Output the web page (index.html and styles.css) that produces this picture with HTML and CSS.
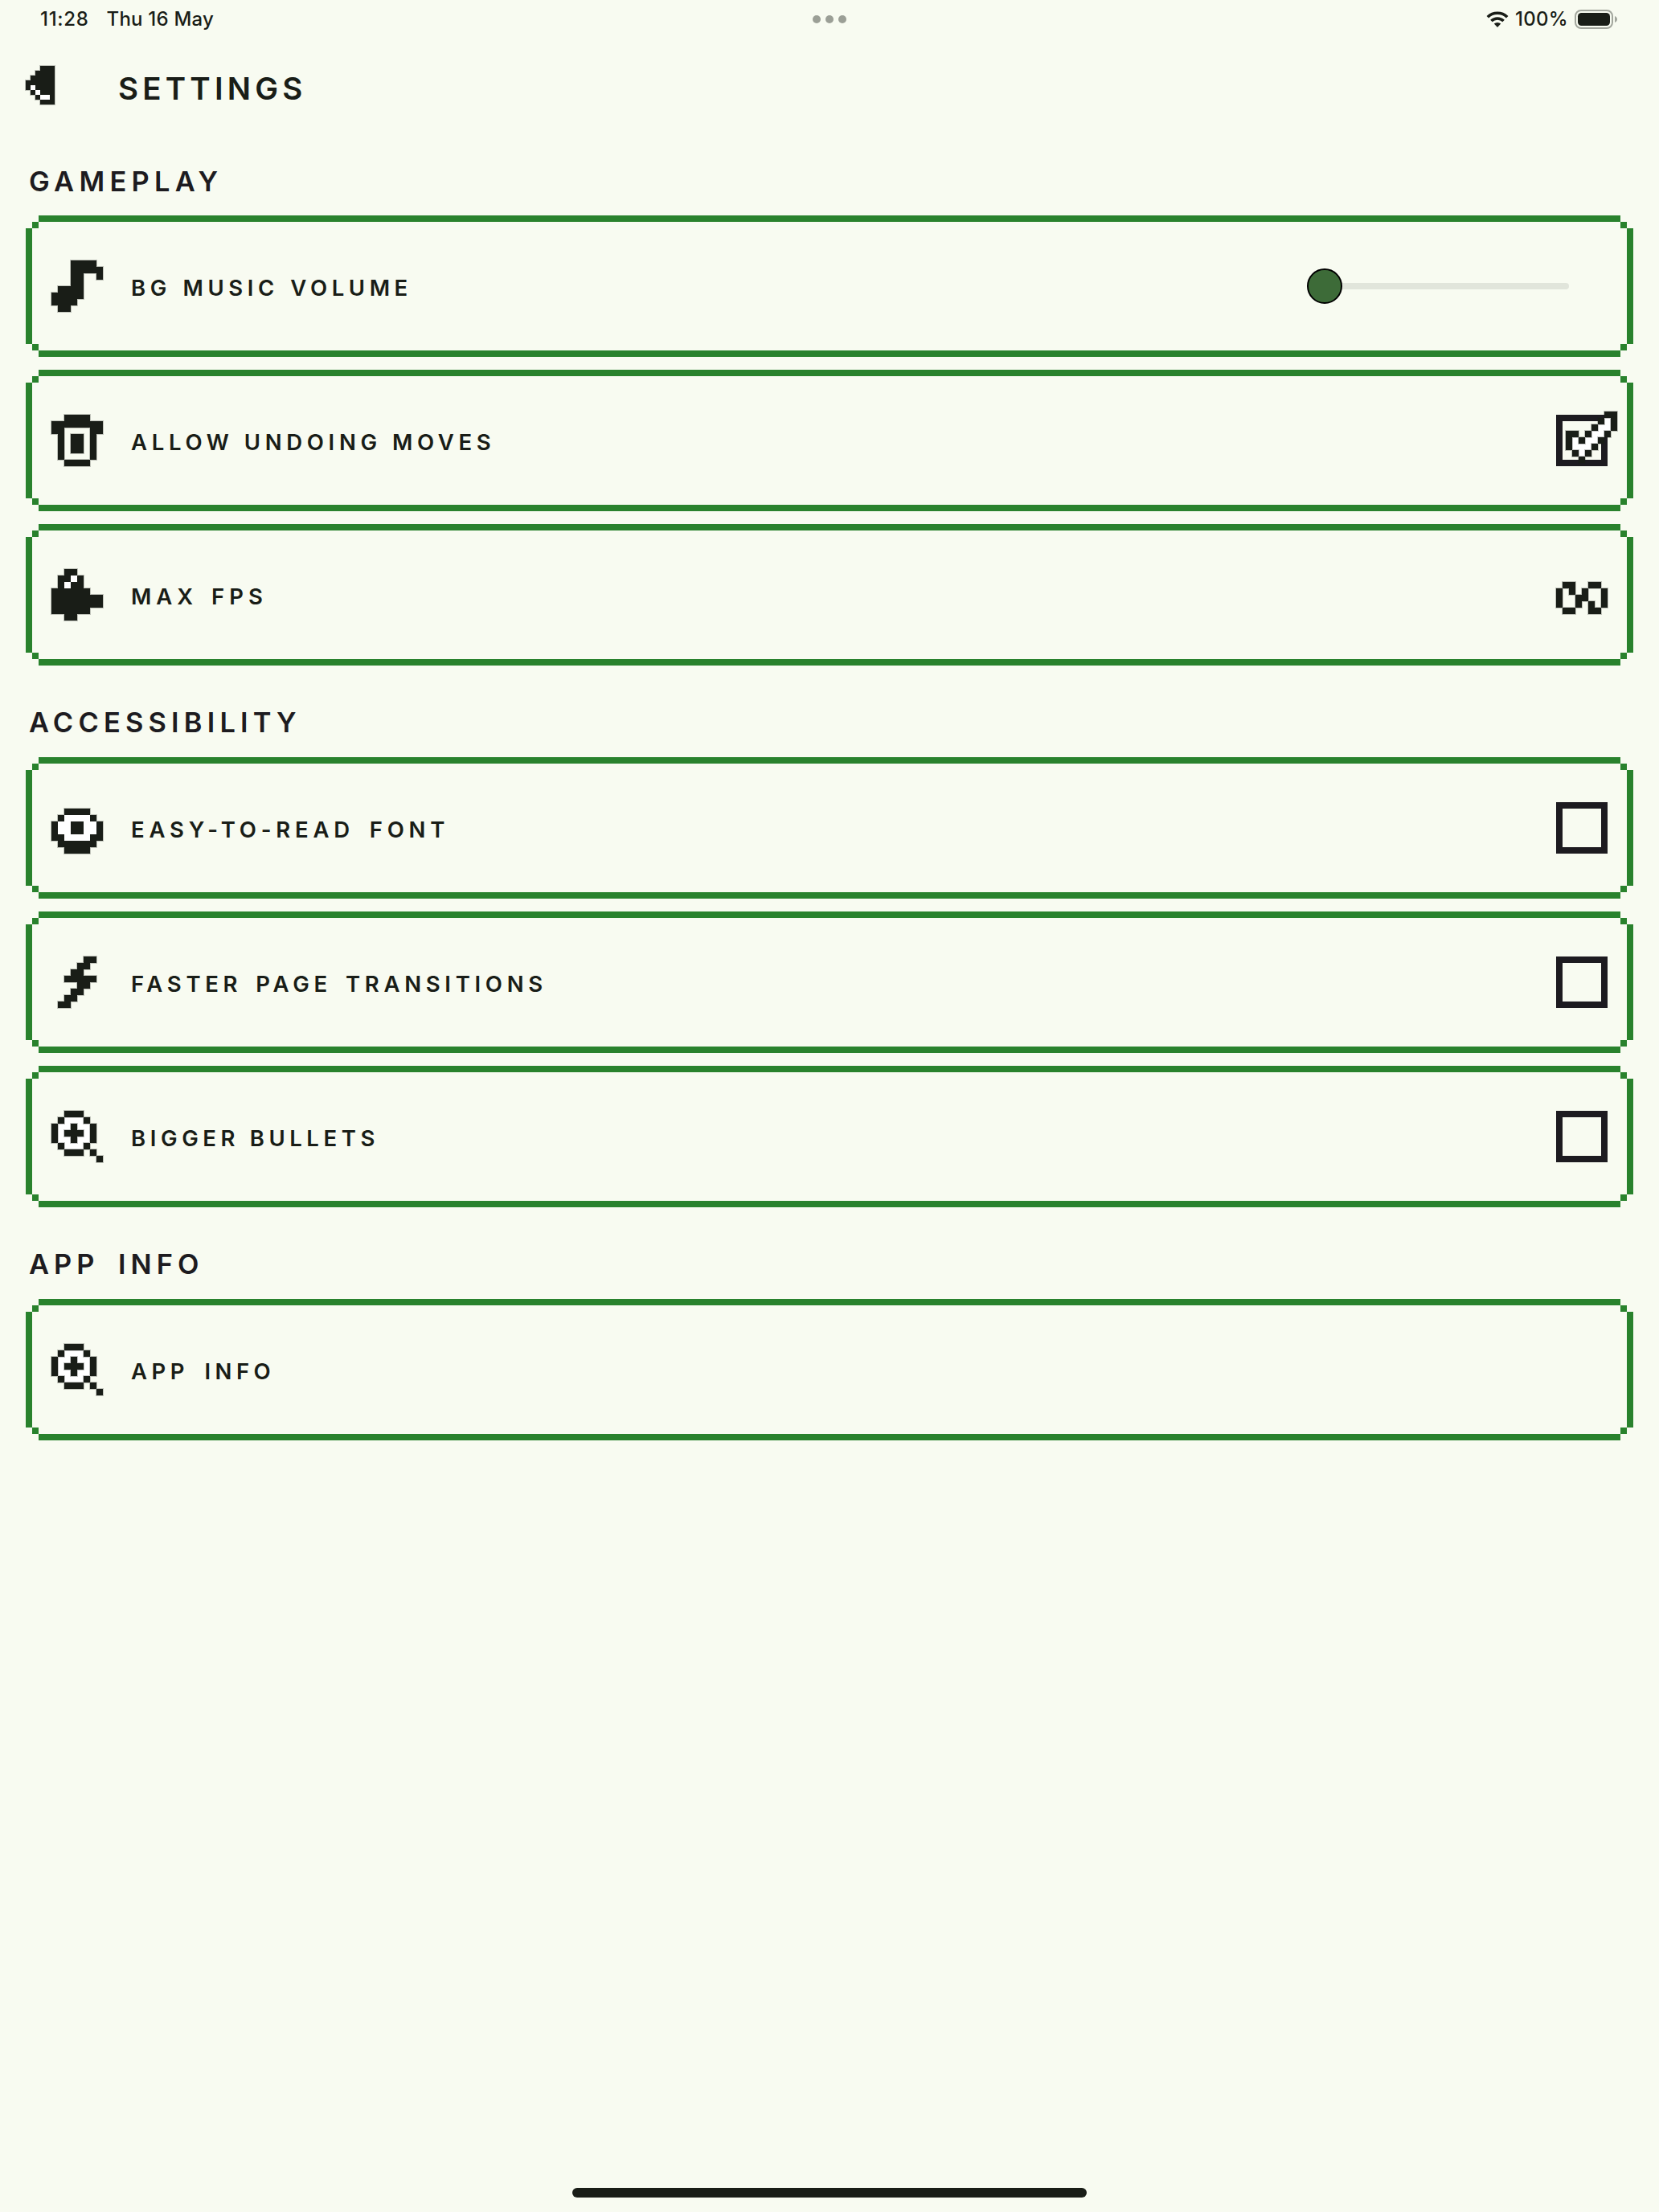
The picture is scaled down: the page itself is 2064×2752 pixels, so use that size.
FILE: index.html
```html
<!DOCTYPE html>
<html lang="en">
<head>
<meta charset="utf-8">
<title>Settings</title>
<link rel="stylesheet" href="styles.css">
</head>
<body>
<svg class="defs" width="0" height="0" aria-hidden="true">
  <symbol id="zoom" viewBox="0 0 8 8"><path class="w" d="M2 1h3v1h1v3h-1v1h-3v-1h-1v-3h1z"/><path d="M2 0h3v1h-3zM1 1h1v1h-1zM5 1h1v1h-1zM0 2h1v3h-1zM6 2h1v3h-1zM3 2h1v1h1v1h-1v1h-1v-1h-1v-1h1zM1 5h1v1h-1zM5 5h1v1h-1zM2 6h3v1h-3zM6 6h1v1h-1zM7 7h1v1h-1z"/></symbol>
</svg>
<header class="status">
  <div class="status-left"><span>11:28</span><span class="date">Thu 16 May</span></div>
  <div class="dots"><i></i><i></i><i></i></div>
  <div class="status-right">
    <svg class="wifi" viewBox="0 0 28 20"><path class="arc" d="M1.8 7.2a17.5 17.5 0 0 1 24.4 0M6.4 12a11 11 0 0 1 15.2 0"/><path d="M14 20l-4.2-4.4a6.2 6.2 0 0 1 8.4 0z"/></svg>
    <span class="percent">100%</span>
    <svg class="battery" viewBox="0 0 54 24"><rect class="shell" x="1" y="1" width="46" height="22" rx="7"/><rect x="4" y="4" width="40" height="16" rx="4.5"/><path class="nub" d="M50 8c4 1.500 4 6.500 0 8z"/></svg>
  </div>
</header>
<nav class="title-bar">
  <svg class="back pixel" viewBox="0 0 6 8"><path d="M3 0h3v8h-3v-1h-1v-1h-1v-1h-1v-2h1v-1h1v-1h1z"/><path class="w" d="M1 4h1v1h1v1h2v1h-2v-1h-1v-1h-1z"/></svg>
  <h1>SETTINGS</h1>
</nav>
<main>
  <section>
    <h2>GAMEPLAY</h2>
    <div class="card">
      <svg class="icon pixel" viewBox="0 0 8 8"><path d="M3 0h4v1h1v2h-1v-1h-2v4h-1v1h-1v1h-2v-1h-1v-2h1v-1h2z"/></svg>
      <span class="label music">BG MUSIC VOLUME</span>
      <div class="slider"><div class="thumb"></div></div>
    </div>
    <div class="card">
      <svg class="icon pixel" viewBox="0 0 8 8"><path fill-rule="evenodd" d="M2 0h4v1h2v2h-1v4h-1v1h-4v-1h-1v-4h-1v-2h2zM2 2v5h4v-5zM3 3h2v3h-2z"/></svg>
      <span class="label undo">ALLOW UNDOING MOVES</span>
      <div class="check"><svg class="tick pixel" viewBox="0 0 8 8"><path class="w" d="M6 1h1v2h-1v1h-1v1h-1v1h-1v1h-1v-1h-1v-2h1v1h1v-1h1v-1h1v-1h1z"/><path d="M6 0h2v3h-1v-2h-1zM5 1h1v1h-1zM4 2h1v1h-1zM0 3h2v1h-1v2h-1zM3 3h1v1h-1zM6 3h1v1h-1zM2 4h1v1h-1zM5 4h1v1h-1zM4 5h1v1h-1zM1 6h1v1h-1zM3 6h1v1h-1zM2 7h1v1h-1z"/></svg></div>
    </div>
    <div class="card">
      <svg class="icon pixel" viewBox="0 0 8 8"><path d="M2 0h2v1h1v2h1v1h2v2h-2v1h-2v1h-2v-1h-2v-4h1v-2h1z"/><path class="w" d="M3 1h1v1h-1zM2 2h1v1h-1z"/></svg>
      <span class="label fps">MAX FPS</span>
      <svg class="icon pixel" viewBox="0 0 8 8"><path d="M1 2h2v2h-1v-1h-1zM5 2h2v1h-2zM0 3h1v3h-1zM7 3h1v3h-1zM4 3h1v2h-1v1h-1v-2h1zM1 6h2v1h-2zM5 5h1v1h1v1h-2z"/></svg>
    </div>
  </section>
  <section>
    <h2 class="access">ACCESSIBILITY</h2>
    <div class="card">
      <svg class="icon pixel" viewBox="0 0 8 8"><path d="M2 1h4v1h1v1h1v3h-1v1h-1v1h-4v-1h-1v-1h-1v-3h1v-1h1z"/><path class="w" fill-rule="evenodd" d="M2 2h4v1h1v2h-1v1h-4v-1h-1v-2h1zM3 3v2h2v-2z"/></svg>
      <span class="label easy">EASY-TO-READ FONT</span>
      <div class="check"></div>
    </div>
    <div class="card">
      <svg class="icon pixel" viewBox="0 0 8 8"><path d="M5 0h2v1h-1v1h-1v1h2v1h-1v1h-1v1h-1v1h-1v1h-2v-1h1v-1h1v-1h1v-1h-2v-1h1v-1h1v-1h1z"/></svg>
      <span class="label faster">FASTER PAGE TRANSITIONS</span>
      <div class="check"></div>
    </div>
    <div class="card">
      <svg class="icon pixel"><use href="#zoom"/></svg>
      <span class="label bigger">BIGGER BULLETS</span>
      <div class="check"></div>
    </div>
  </section>
  <section>
    <h2 class="app">APP INFO</h2>
    <div class="card">
      <svg class="icon pixel"><use href="#zoom"/></svg>
      <span class="label info">APP INFO</span>
    </div>
  </section>
</main>
<footer><div class="home"></div></footer>
</body>
</html>
```
FILE: styles.css
```css
* { box-sizing: border-box; }
body {
  margin: 0;
  width: 2064px;
  height: 2752px;
  display: flex;
  flex-direction: column;
  background: #f8fbf1;
  color: #191d17;
  font-family: Inter, "Liberation Sans", sans-serif;
  overflow: hidden;
}
svg { display: block; fill: #191d17; flex: none; }
.defs { position: absolute; }
.pixel, symbol { overflow: visible; }
.pixel {
  shape-rendering: crispEdges;
  stroke: rgba(25, 29, 23, 0.25);
  stroke-width: 0.25;
  paint-order: stroke;
}
.w { fill: #fff; stroke: none; }

.status {
  height: 48px;
  display: grid;
  grid-template-columns: 1fr auto 1fr;
  align-items: center;
  padding: 0 51px 0 50px;
  font-size: 24px;
  line-height: 48px;
  font-weight: 500;
}
.status-left { display: flex; gap: 22px; letter-spacing: 0.7px; }
.date { letter-spacing: 0.2px; }
.dots { display: flex; gap: 6px; margin-left: 1px; }
.dots i { width: 10px; height: 10px; border-radius: 50%; background: #9b9f96; }
.status-right { display: flex; justify-content: flex-end; align-items: center; }
.wifi { width: 28px; height: 20px; margin-right: 8px; }
.wifi .arc { fill: none; stroke: #191d17; stroke-width: 3.6; }
.percent { width: 65px; margin-right: 9px; letter-spacing: 0.3px; }
.battery { width: 54px; height: 24px; }
.shell { fill: none; stroke: #a2a69d; stroke-width: 2; }
.nub { fill: #a2a69d; }

.title-bar {
  height: 120px;
  padding: 0 32px;
  display: flex;
  align-items: center;
  gap: 79px;
}
.back { width: 36px; height: 48px; margin-top: -4px; }
h1, h2 { margin: 0; font-weight: 600; }
h1 { font-size: 38.5px; line-height: 48px; letter-spacing: 5.2px; margin-top: 4px; }

main { padding: 0 32px; display: flex; flex-direction: column; }
section { display: flex; flex-direction: column; gap: 16px; }
h2 {
  height: 98px;
  padding: 21px 0 0 4px;
  color: #1d1b20;
  font-size: 34.4px;
  line-height: 100px;
  letter-spacing: 6.3px;
}
section:first-child h2 { height: 84px; padding-top: 0; line-height: 115px; }
.access { letter-spacing: 6.2px; }
.app { letter-spacing: 6px; word-spacing: 9px; }

.card {
  --g: #29822d;
  height: 176px;
  padding: 0 32px;
  display: flex;
  align-items: center;
  background:
    linear-gradient(var(--g), var(--g)) 50% 0 / calc(100% - 32px) 8px,
    linear-gradient(var(--g), var(--g)) 50% 100% / calc(100% - 32px) 8px,
    linear-gradient(var(--g), var(--g)) 0 50% / 8px calc(100% - 32px),
    linear-gradient(var(--g), var(--g)) 100% 50% / 8px calc(100% - 32px),
    linear-gradient(var(--g), var(--g)) 8px 8px / 8px 8px,
    linear-gradient(var(--g), var(--g)) calc(100% - 8px) 8px / 8px 8px,
    linear-gradient(var(--g), var(--g)) 8px calc(100% - 8px) / 8px 8px,
    linear-gradient(var(--g), var(--g)) calc(100% - 8px) calc(100% - 8px) / 8px 8px;
  background-repeat: no-repeat;
}
.icon { width: 64px; height: 64px; }
.label {
  flex: 1;
  margin: 4px 0 0 35px;
  font-size: 27.5px;
  font-weight: 600;
  line-height: 40px;
  letter-spacing: 5.7px;
  white-space: nowrap;
}
.music { letter-spacing: 5.6px; word-spacing: 2px; }
.undo { word-spacing: 0.5px; }
.fps { letter-spacing: 6px; word-spacing: 4px; }
.easy { letter-spacing: 5.8px; word-spacing: 6px; }
.faster { word-spacing: 4.5px; }
.bigger { letter-spacing: 5.6px; word-spacing: 0; }
.info { letter-spacing: 5.5px; word-spacing: 7px; }

.slider {
  width: 304px;
  height: 8px;
  margin-right: 48px;
  border-radius: 4px;
  background: #e1e5db;
  display: flex;
  align-items: center;
}
.thumb {
  flex: none;
  width: 44px;
  height: 44px;
  margin-left: -22px;
  border: 2px solid #000;
  border-radius: 50%;
  background: #3d6b38;
}
.check { position: relative; width: 64px; height: 64px; border: 8px solid #1d1b20; }
.tick { position: absolute; left: 4px; top: -12px; width: 64px; height: 64px; }

footer { margin-top: auto; padding-bottom: 18px; display: flex; justify-content: center; }
.home { width: 640px; height: 12px; border-radius: 6px; background: #191d17; }
```
